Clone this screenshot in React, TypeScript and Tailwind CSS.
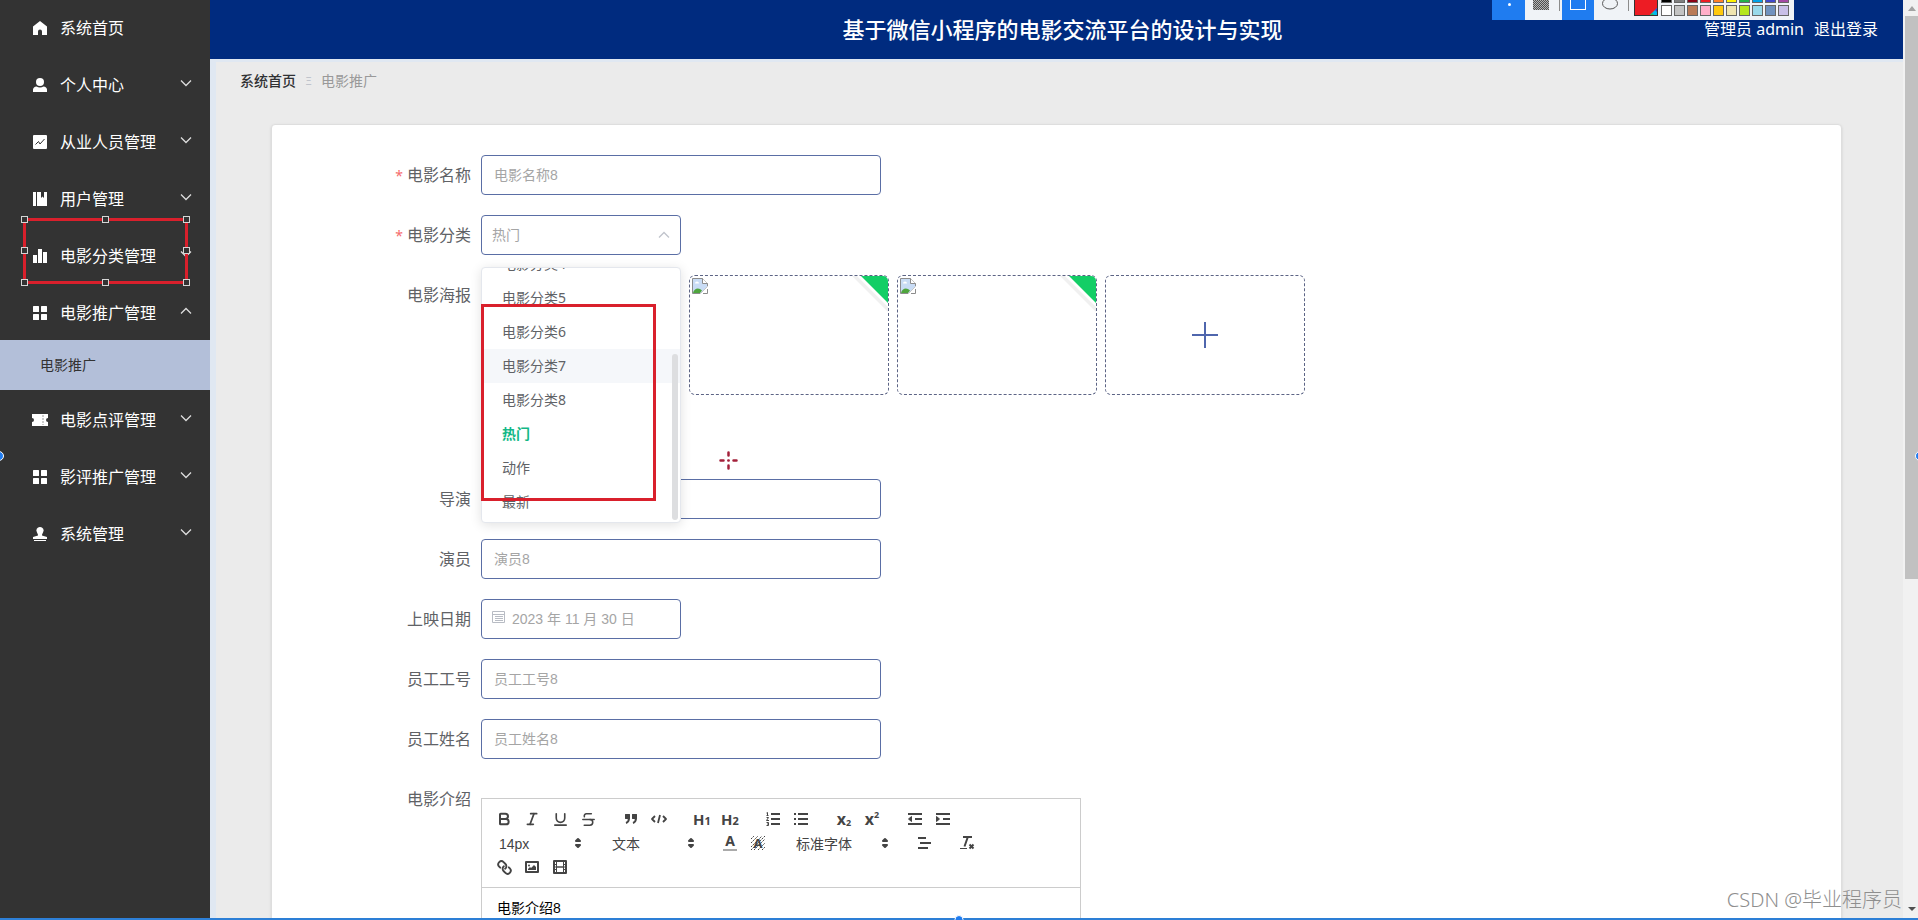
import React from "react";
import { Bold, Italic, Link, Strikethrough, Underline } from "lucide-react";

interface NavItem {
  label: string;
  icon: React.ReactNode;
  open?: boolean;
  children?: string[];
}

const NAV_ITEMS: NavItem[] = [
  { label: "个人中心", icon: <UserIcon /> },
  { label: "从业人员管理", icon: <MarketingIcon /> },
  { label: "用户管理", icon: <NotebookIcon /> },
  { label: "电影分类管理", icon: <BarsIcon /> },
  { label: "电影推广管理", icon: <MenuIcon />, open: true, children: ["电影推广"] },
  { label: "电影点评管理", icon: <TicketIcon /> },
  { label: "影评推广管理", icon: <MenuIcon /> },
  { label: "系统管理", icon: <StampIcon /> },
];

const CATEGORIES = ["电影分类4", "电影分类5", "电影分类6", "电影分类7", "电影分类8", "热门", "动作", "最新"];

const SWATCHES = [
  ["#000000", "#7f7f7f", "#880015", "#ed1c24", "#ff7f27", "#fff200", "#22b14c", "#00a2e8", "#3f48cc", "#a349a4"],
  ["#ffffff", "#c3c3c3", "#b97a57", "#ffaec9", "#ffc90e", "#efe4b0", "#b5e61d", "#99d9ea", "#7092be", "#c8bfe7"],
];

export default function App() {
  return (
    <div className="relative flex h-screen overflow-hidden bg-[#ebebeb] font-['Noto_Sans','Noto_Sans_CJK_SC',sans-serif]">
      <Sidebar />
      <div className="flex min-w-0 flex-1 flex-col">
        <TopBar />
        <main className="min-h-0 flex-1 overflow-hidden border-l-6 border-t-3 border-[#e0e8f2]">
          <nav className="flex items-center gap-[9px] px-6 pt-[7px] text-sm leading-6">
            <a href="#home" className="font-medium text-[#303133]">系统首页</a>
            <span className="w-[7px] text-center text-[10px] text-[#c0c4cc]">Ξ</span>
            <span className="text-[#999999]">电影推广</span>
          </nav>
          <PromotionForm />
        </main>
      </div>
      <PageScrollbar />
      <Annotations />
    </div>
  );
}

function Sidebar() {
  return (
    <aside className="w-[210px] shrink-0 bg-[#333333] text-base text-white">
      <a href="#home" className="flex h-[55px] items-center gap-3 pl-8">
        <HomeIcon />
        系统首页
      </a>
      {NAV_ITEMS.map((item) => (
        <div key={item.label}>
          <button className="flex h-[57px] w-full items-center gap-3 pl-8 pr-[18px] pt-[3px]">
            {item.icon}
            <span className="flex-1 text-left">{item.label}</span>
            <Chevron up={item.open} className="mb-1 text-[#dddddd]" />
          </button>
          {item.children?.map((child) => (
            <a key={child} href="#promotion" className="flex h-[50px] items-center bg-[#b3bfd9] pl-10 text-sm text-[#333333]">
              {child}
            </a>
          ))}
        </div>
      ))}
    </aside>
  );
}

function TopBar() {
  return (
    <header className="relative flex h-[59px] shrink-0 items-center justify-center bg-[#002b7f] pb-0.5 pl-3 text-white">
      <h1 className="text-[22px] font-medium leading-7">基于微信小程序的电影交流平台的设计与实现</h1>
      <div className="absolute right-[25px] flex items-center gap-[10px] text-base">
        <span>管理员 admin</span>
        <a href="#logout">退出登录</a>
      </div>
    </header>
  );
}

function PromotionForm() {
  return (
    <form className="ml-[55px] mr-[61px] mt-[31px] flex min-h-[1000px] flex-col gap-5 rounded-sm border border-[#dedede] bg-white pt-[30px] shadow-sm">
      <FormRow label="电影名称" id="name" required>
        <TextField id="name" placeholder="电影名称8" />
      </FormRow>
      <FormRow label="电影分类" id="category" required>
        <CategorySelect />
      </FormRow>
      <FormRow label="电影海报" id="poster">
        <div className="flex gap-2 pb-16">
          <PosterThumb />
          <PosterThumb />
          <PosterThumb />
          <button type="button" aria-label="上传" id="poster" className="flex h-[120px] w-[200px] items-center justify-center rounded-md border border-dashed border-[#5c6485]">
            <svg width="26" height="26" viewBox="0 0 26 26" stroke="#4f66ad" strokeWidth="2">
              <path d="M13 0v26M0 13h26" />
            </svg>
          </button>
        </div>
      </FormRow>
      <FormRow label="导演" id="director">
        <TextField id="director" />
      </FormRow>
      <FormRow label="演员" id="actor">
        <TextField id="actor" placeholder="演员8" />
      </FormRow>
      <FormRow label="上映日期" id="date">
        <div className="relative">
          <CalendarIcon />
          <input id="date" placeholder="2023 年 11 月 30 日" className="h-10 w-[200px] rounded border border-[#5a6ea5] pl-[30px] font-['Liberation_Sans','Noto_Sans_CJK_SC',sans-serif] text-sm outline-none placeholder:text-[#a5a5a5]" />
        </div>
      </FormRow>
      <FormRow label="员工工号" id="staff-no">
        <TextField id="staff-no" placeholder="员工工号8" />
      </FormRow>
      <FormRow label="员工姓名" id="staff-name">
        <TextField id="staff-name" placeholder="员工姓名8" />
      </FormRow>
      <FormRow label="电影介绍" id="intro">
        <RichEditor />
      </FormRow>
    </form>
  );
}

interface FormRowProps {
  label: string;
  id: string;
  required?: boolean;
  children: React.ReactNode;
}

function FormRow({ label, id, required, children }: FormRowProps) {
  return (
    <div className="flex items-start">
      <label htmlFor={id} className="w-[209px] shrink-0 pr-[10px] text-right text-base leading-10 text-[#606266]">
        {required && <span className="mr-1 text-sm text-[#f56c6c]">*</span>}
        {label}
      </label>
      {children}
    </div>
  );
}

function TextField({ id, placeholder }: { id: string; placeholder?: string }) {
  return (
    <input
      id={id}
      placeholder={placeholder}
      className="h-10 w-[400px] rounded border border-[#5a6ea5] px-3 font-['Liberation_Sans','Noto_Sans_CJK_SC',sans-serif] text-sm text-[#606266] outline-none placeholder:text-[#a5a5a5]"
    />
  );
}

function CategorySelect() {
  return (
    <div className="relative">
      <select id="category" defaultValue="热门" className="h-10 w-[200px] appearance-none rounded border border-[#5a6ea5] bg-white px-[10px] text-sm text-[#a5a5a5] outline-none">
        {CATEGORIES.map((name) => (
          <option key={name}>{name}</option>
        ))}
      </select>
      <Chevron up className="pointer-events-none absolute right-[11px] top-3.5 text-[#c0c4cc]" />

      {/* Opened list, scrolled to its end */}
      <div className="absolute left-0 top-[52px] z-10 flex h-[256px] w-[200px] flex-col justify-end overflow-hidden rounded border border-[#e4e7ed] bg-white pb-[3px] shadow-[0_2px_12px_rgba(0,0,0,0.12)]">
        <ul role="listbox" aria-label="电影分类">
          {CATEGORIES.map((name) => (
            <li
              key={name}
              role="option"
              aria-selected={name === "热门"}
              className={`h-[34px] px-5 text-sm leading-[34px] ${
                name === "热门" ? "font-bold text-[#12b886]" : "text-[#606266]"
              } ${name === "电影分类7" ? "bg-[#f5f7fa]" : ""}`}
            >
              {name}
            </li>
          ))}
        </ul>
        <div className="absolute bottom-0.5 right-0.5 h-[166px] w-1.5 rounded-full bg-[#dddee0]" />
      </div>
    </div>
  );
}

function PosterThumb() {
  return (
    <div className="relative h-[120px] w-[200px] overflow-hidden rounded-md border border-dashed border-[#5c6485]">
      <BrokenImageIcon />
      <svg className="absolute right-0 top-0" width="40" height="40" viewBox="0 0 40 40">
        <path d="M9 0L40 31V36L4 0Z" fill="#000" opacity=".06" />
        <path d="M13 0H40V27Z" fill="#13ce66" />
      </svg>
    </div>
  );
}

function RichEditor() {
  return (
    <div className="mt-[19px] w-[600px] border border-[#cccccc]">
      <div className="flex flex-wrap border-b border-[#cccccc] p-2 text-[#444444]">
        <ToolGroup>
          <Tool label="加粗"><Bold size={16} strokeWidth={3} /></Tool>
          <Tool label="斜体"><Italic size={16} strokeWidth={2.5} /></Tool>
          <Tool label="下划线"><Underline size={17} strokeWidth={2.3} /></Tool>
          <Tool label="删除线"><Strikethrough size={17} strokeWidth={2.2} /></Tool>
        </ToolGroup>
        <ToolGroup>
          <Tool label="引用">
            <Glyph>
              <path fill="currentColor" d="M4 5h3v3H4zM11 5h3v3h-3z" />
              <path d="M4 5h3v3H4zM11 5h3v3h-3zM7 8c0 4-3 5-3 5M14 8c0 4-3 5-3 5" />
            </Glyph>
          </Tool>
          <Tool label="代码">
            <Glyph><path strokeWidth="1.8" d="M5 6L2 9l3 3M13 6l3 3-3 3M10 5L8 13" /></Glyph>
          </Tool>
        </ToolGroup>
        <ToolGroup>
          <Tool label="标题一"><HeadingMark level="1" /></Tool>
          <Tool label="标题二"><HeadingMark level="2" /></Tool>
        </ToolGroup>
        <ToolGroup>
          <Tool label="有序列表">
            <Glyph>
              <path d="M7 4h9M7 9h9M7 14h9" />
              <path strokeWidth="1" d="M2.500 5.500h2M3.500 5.500V2.500L2.500 3M2.500 7.500h2L2.500 10.500h2.500M2.500 12.500h2v3h-2M3 14h1.500" />
            </Glyph>
          </Tool>
          <Tool label="无序列表">
            <Glyph><path d="M6 4h10M6 9h10M6 14h10M2 4h2M2 9h2M2 14h2" /></Glyph>
          </Tool>
        </ToolGroup>
        <ToolGroup>
          <Tool label="下标"><span className="text-base font-bold leading-4">x</span><span className="pt-2 text-[9px] font-bold leading-3">2</span></Tool>
          <Tool label="上标"><span className="text-base font-bold leading-4">x</span><span className="pb-2 text-[9px] font-bold leading-3">2</span></Tool>
        </ToolGroup>
        <ToolGroup>
          <Tool label="减少缩进">
            <Glyph><path d="M2 4h14M2 14h14M9 9h7" /><path fill="currentColor" strokeWidth="1" d="M5.500 6.500v5L2.500 9z" /></Glyph>
          </Tool>
          <Tool label="增加缩进">
            <Glyph><path d="M2 4h14M2 14h14M9 9h7" /><path fill="currentColor" strokeWidth="1" d="M2.500 6.500v5L5.500 9z" /></Glyph>
          </Tool>
        </ToolGroup>
        <Picker label="字号" value="14px" className="w-[98px]" />
        <Picker label="标题" value="文本" className="w-[98px]" />
        <ToolGroup>
          <Tool label="字体颜色"><span className="h-4 w-3.5 border-b-2 border-[#aaaaaa] text-center text-sm font-bold leading-3">A</span></Tool>
          <Tool label="背景颜色">
            <svg width="18" height="18" viewBox="0 0 18 18" stroke="currentColor" strokeWidth="1">
              <path strokeDasharray="2 1" d="M2 5l3-3M2 9l7-7M2 13L13 2M2 16L16 2M5 16L16 5M9 16l7-7M13 16l3-3" />
              <text x="9" y="14" textAnchor="middle" fontSize="13" fontWeight="700" fill="currentColor" stroke="none">A</text>
            </svg>
          </Tool>
        </ToolGroup>
        <Picker label="字体" value="标准字体" className="w-[108px]" />
        <ToolGroup>
          <Tool label="对齐"><Glyph><path d="M3 4h8M5 9h11M3 14h10" /></Glyph></Tool>
        </ToolGroup>
        <ToolGroup>
          <Tool label="清除格式">
            <Glyph>
              <path d="M5 3h9M6.500 12.500L9.800 3M11.500 10.500l4 4M15.500 10.500l-4 4" />
              <path strokeWidth="1" d="M2 14.500h7" />
            </Glyph>
          </Tool>
        </ToolGroup>
        <ToolGroup>
          <Tool label="链接"><Link size={15} strokeWidth={3} className="rotate-90" /></Tool>
          <Tool label="图片">
            <Glyph>
              <path d="M3 4h12v10H3z" />
              <circle cx="6" cy="7.500" r="1" fill="currentColor" stroke="none" />
              <path fill="currentColor" stroke="none" d="M5 12v-1l2-2 1 1 3-3 2 2v3z" />
            </Glyph>
          </Tool>
          <Tool label="视频">
            <Glyph>
              <path d="M3 3h12v12H3z" />
              <path strokeWidth="1" d="M5.500 3v12M12.500 3v12M3 6.500h2M3 9h2M3 11.500h2M13 6.500h2M13 9h2M13 11.500h2" />
              <path strokeWidth="1.500" d="M6 9h6" />
            </Glyph>
          </Tool>
        </ToolGroup>
      </div>
      <textarea
        id="intro"
        defaultValue="电影介绍8"
        className="block h-[200px] w-full resize-none px-[15px] py-2.5 font-['Liberation_Sans','Noto_Sans_CJK_SC',sans-serif] text-sm leading-5 text-black outline-none"
      />
    </div>
  );
}

function ToolGroup({ children }: { children: React.ReactNode }) {
  return <div className="mr-[15px] flex">{children}</div>;
}

function Tool({ label, children }: { label: string; children: React.ReactNode }) {
  return (
    <button type="button" aria-label={label} className="flex h-6 w-7 items-center justify-center">
      {children}
    </button>
  );
}

function HeadingMark({ level }: { level: string }) {
  return (
    <>
      <span className="text-[15px] font-bold leading-4">H</span>
      <span className="pt-1 text-[11px] font-bold leading-4">{level}</span>
    </>
  );
}

function Picker({ label, value, className }: { label: string; value: string; className: string }) {
  return (
    <div className={`relative mr-[15px] h-6 ${className}`}>
      <select aria-label={label} className="h-6 w-full appearance-none pl-[9px] font-['Liberation_Sans','Noto_Sans_CJK_SC',sans-serif] text-sm outline-none">
        <option>{value}</option>
      </select>
      <svg className="pointer-events-none absolute right-px top-[3px]" width="18" height="18" viewBox="0 0 18 18" fill="currentColor" stroke="currentColor" strokeWidth="2" strokeLinejoin="round">
        <path d="M7 11l2 2 2-2zM7 7l2-2 2 2z" />
      </svg>
    </div>
  );
}

function Glyph({ children }: { children: React.ReactNode }) {
  return (
    <svg width="18" height="18" viewBox="0 0 18 18" fill="none" stroke="currentColor" strokeWidth="2" strokeLinejoin="round">
      {children}
    </svg>
  );
}

function PageScrollbar() {
  return (
    <div className="flex w-[15px] shrink-0 flex-col items-end bg-[#f1f1f1]">
      <div className="flex h-4 w-[13px] items-center justify-center">
        <svg width="8" height="5" viewBox="0 0 8 5" fill="#a3a3a3"><path d="M0 5l4-5 4 5z" /></svg>
      </div>
      <div className="h-[563px] w-[13px] bg-[#c1c1c1]" />
      <div className="mb-[9px] mt-auto flex w-[13px] justify-center">
        <svg width="8" height="4" viewBox="0 0 8 4" fill="#505050"><path d="M0 0h8L4 4z" /></svg>
      </div>
    </div>
  );
}

/* Drawing tool: marked regions, cursor, palette and frame handles */
function Annotations() {
  return (
    <>
      <div className="absolute left-[23px] top-[218px] h-[66px] w-[165px] border-3 border-[#d9202c]">
        {["-left-[5px] -top-[5px]", "left-[76px] -top-[5px]", "-right-[5px] -top-[5px]", "-left-[5px] top-[26px]", "-right-[5px] top-[26px]", "-left-[5px] -bottom-[5px]", "left-[76px] -bottom-[5px]", "-right-[5px] -bottom-[5px]"].map((place) => (
          <span key={place} className={`absolute size-[7px] border border-[#d5d5d5] bg-[#333333] ${place}`} />
        ))}
      </div>
      <div className="absolute left-[481px] top-[304px] z-20 h-[197px] w-[175px] border-3 border-[#d9202c]" />

      <svg className="absolute left-[719px] top-[451px]" width="19" height="19" viewBox="0 0 19 19" stroke="#a3203a" strokeWidth="2.500" strokeLinecap="round">
        <path d="M1.500 9.500h3M14.500 9.500h3M9.500 1.500v3M9.500 14.500v3M9.300 9.500h.4" />
      </svg>

      <div className="absolute right-[124px] top-0 flex h-5 w-[302px] items-start bg-[#f0f3f7]">
        <div className="h-full w-[33px] bg-[#1f7cf0]"><span className="ml-4 mt-[3px] block size-[3px] rounded-full bg-white" /></div>
        <svg width="37" height="20" viewBox="0 0 37 20">
          <defs>
            <pattern id="dots" width="2" height="2" patternUnits="userSpaceOnUse">
              <rect width="2" height="2" fill="#b5b5b5" />
              <path d="M0 0h1v1H0zM1 1h1v1H1z" fill="#4f4f4f" />
            </pattern>
          </defs>
          <rect x="8" width="16" height="10" fill="url(#dots)" />
          <path d="M34.500 0v11" stroke="#8c8c8c" />
        </svg>
        <div className="h-full w-8 bg-[#1f7cf0]"><span className="mx-auto block h-[10px] w-4 border border-t-0 border-white" /></div>
        <svg width="40" height="20" viewBox="0 0 40 20" fill="none">
          <ellipse cx="16" cy="3.500" rx="7.500" ry="5.500" stroke="#555" />
          <path d="M34.500 0v11" stroke="#8c8c8c" />
        </svg>
        <svg width="24" height="16" viewBox="0 0 24 16">
          <path d="M0 0h24v16H0z" fill="#333" />
          <path d="M1 0h22v15H1z" fill="#ed1c24" />
          <path d="M23 8v7h-7z" fill="#00b7ef" />
          <path d="M23 8v4l-2-2z" fill="#4338ca" />
          <path d="M16 15h4l-2-2z" fill="#22c55e" />
        </svg>
        <div className="ml-[3px] flex flex-col gap-0.5">
          {SWATCHES.map((row, i) => (
            <div key={i} className="flex gap-0.5">
              {row.map((color) => (
                <span key={color} className={`w-[11px] border border-[#666666] ${i === 0 ? "h-[3px] border-t-0" : "h-[11px]"}`} style={{ backgroundColor: color }} />
              ))}
            </div>
          ))}
        </div>
      </div>

      <div className="absolute bottom-1 right-4 text-xl font-light leading-8 text-[#8e8e8e]">CSDN @毕业程序员</div>
      <div className="absolute inset-x-0 bottom-0 h-0.5 bg-[#2d7fd6]" />
      <span className="absolute -bottom-1 left-1/2 size-[9px] -translate-x-1/2 rounded-full border border-white bg-[#1f7cf0]" />
      <span className="absolute -left-[6px] top-[451px] size-[10px] rounded-full border border-white bg-[#1f7cf0]" />
      <span className="absolute -right-[7px] top-[451px] size-[10px] rounded-full border border-white bg-[#1f7cf0]" />
    </>
  );
}

function Chevron({ up, className }: { up?: boolean; className: string }) {
  return (
    <svg className={className} width="12" height="12" viewBox="0 0 12 12" fill="none" stroke="currentColor" strokeWidth="1.300">
      <path d={up ? "M1 8.500l5-5 5 5" : "M1 3.500l5 5 5-5"} />
    </svg>
  );
}

function NavGlyph({ children }: { children: React.ReactNode }) {
  return (
    <svg width="16" height="16" viewBox="0 0 16 16" fill="currentColor">
      {children}
    </svg>
  );
}

function HomeIcon() {
  return <NavGlyph><path d="M8 1L15 6.500V15h-5v-3.500a2 2 0 0 0-4 0V15H1V6.500z" /></NavGlyph>;
}

function UserIcon() {
  return <NavGlyph><circle cx="8" cy="5" r="4" /><path d="M1 15v-2.500C1 11 2.500 9.500 4.500 9.500 6.500 10.800 9.500 10.800 11.500 9.500 13.500 9.500 15 11 15 12.500V15z" /></NavGlyph>;
}

function MarketingIcon() {
  return (
    <NavGlyph>
      <rect x="1" y="1" width="14" height="14" rx="1" />
      <path d="M3.500 10.500L6.500 7.500 8 10l4.500-5" fill="none" stroke="#333333" />
    </NavGlyph>
  );
}

function NotebookIcon() {
  return <NavGlyph><path d="M1 1h3v14H1zM5 1h4v6l1.500-1.500L12 7V1h3v14H5z" /></NavGlyph>;
}

function BarsIcon() {
  return <NavGlyph><path d="M1 7h4v8H1zM6 1h4v14H6zM11 4h4v11h-4z" /></NavGlyph>;
}

function MenuIcon() {
  return (
    <NavGlyph>
      <rect x="1" y="1" width="6" height="6" rx=".5" />
      <rect x="9" y="1" width="6" height="6" rx=".5" />
      <rect x="1" y="9" width="6" height="6" rx=".5" />
      <rect x="9" y="9" width="6" height="6" rx=".5" />
    </NavGlyph>
  );
}

function TicketIcon() {
  return (
    <NavGlyph>
      <path d="M0 2h16v4a2 2 0 0 0 0 4v4H0v-4a2 2 0 0 0 0-4z" />
      <path d="M11 3v10" stroke="#999999" strokeDasharray="2 1" />
    </NavGlyph>
  );
}

function StampIcon() {
  return <NavGlyph><path d="M8 1a3.500 3.500 0 0 1 3 5.500C10.300 7.800 10 8.500 10 9.500L15 11v2H1v-2l5-1.500c0-1-.3-1.700-1-3A3.500 3.500 0 0 1 8 1zM2 14h12v1H2z" /></NavGlyph>;
}

function CalendarIcon() {
  return (
    <svg className="absolute left-[11px] top-3" width="13" height="13" viewBox="0 0 13 13" fill="none" stroke="#b8bcc4">
      <path d="M.5 .5h12v11H.5zM0 3.500h13M3 5.500h8M3 7.500h8M3 9.500h8" />
    </svg>
  );
}

function BrokenImageIcon() {
  return (
    <svg className="ml-0.5 mt-0.5" width="16" height="16" viewBox="0 0 16 16">
      <path d="M.5 .5h10l5 5v3l-7 7H.5z" fill="#c9dcf5" stroke="#8c8c8c" />
      <path d="M10.500 .5v5h5" fill="#fff" stroke="#8c8c8c" />
      <path d="M3 5.500a2 2 0 0 1 4 0z" fill="#fff" />
      <path d="M1 15c1-5 6-6 9-2.500L8 15z" fill="#4fa53d" />
      <path d="M8 16l8-8v3l-5 5z" fill="#fff" />
      <path d="M11 15.500h4.500V11" fill="none" stroke="#8c8c8c" />
    </svg>
  );
}
